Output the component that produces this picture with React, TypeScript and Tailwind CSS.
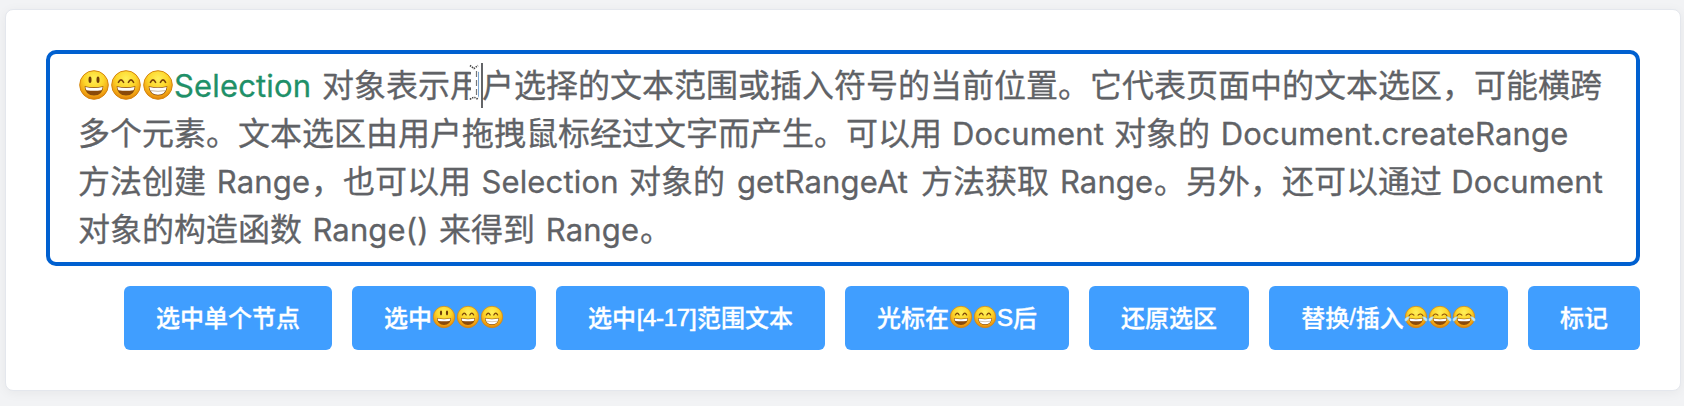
import type { ReactNode } from 'react';

type Mood = 'smile' | 'grin' | 'beam' | 'joy';

function Emoji({ mood, className }: { mood: Mood; className: string }) {
  return (
    <svg viewBox="0 0 32 32" className={className} role="img">
      <defs>
        <radialGradient id={`face-${mood}`} cx="50%" cy="28%" r="75%">
          <stop offset="0" stopColor="#fff05a" />
          <stop offset="0.45" stopColor="#fdd62a" />
          <stop offset="0.8" stopColor="#f0a012" />
          <stop offset="1" stopColor="#d97608" />
        </radialGradient>
      </defs>
      <circle cx="16" cy="16" r="14.3" fill={`url(#face-${mood})`} stroke="#d5870f" strokeWidth="1" />
      {mood === 'smile' && (
        <g fill="#6f3c08">
          <ellipse cx="12" cy="10.7" rx="1.5" ry="3.3" />
          <ellipse cx="20" cy="10.7" rx="1.5" ry="3.3" />
        </g>
      )}
      {(mood === 'grin' || mood === 'beam') && (
        <g fill="none" stroke="#7a4308" strokeWidth="1.6" strokeLinecap="round">
          <path d="M8.4 13.3Q11 8.4 13.6 13.3" />
          <path d="M18.4 13.3Q21 8.4 23.6 13.3" />
        </g>
      )}
      {mood === 'joy' && (
        <g fill="none" stroke="#8a4b08" strokeWidth="1.5" strokeLinecap="round" strokeLinejoin="round">
          <path d="M6.6 14.6Q9.2 10 13.2 13.6" />
          <path d="M25.4 14.6Q22.8 10 18.8 13.6" />
        </g>
      )}
      <path d="M6.6 17.2Q16 19.4 25.4 17.2Q24.6 26.6 16 26.6Q7.4 26.6 6.6 17.2Z" fill="#8a4a0a" />
      {mood === 'beam' ? (
        <g>
          <path d="M7.3 17.9Q16 19.8 24.7 17.9Q23.6 25.7 16 25.7Q8.4 25.7 7.3 17.9Z" fill="#fff" />
          <path d="M8 21.6Q16 23 24 21.6" fill="none" stroke="#b9a58c" strokeWidth="0.8" />
        </g>
      ) : (
        <path d="M7.4 17.9Q16 19.9 24.6 17.9Q24.3 20 23.4 21.2Q16 22.4 8.6 21.2Q7.7 20 7.4 17.9Z" fill="#fff" />
      )}
      {mood === 'joy' && (
        <g fill="#c3e6f5" stroke="#7fc0e0" strokeWidth="0.5">
          <path d="M7.2 15.4C3.4 15.6 0.6 18 1 20.4C1.6 22.8 5.2 22 7.2 15.4Z" />
          <path d="M24.8 15.4C28.6 15.6 31.4 18 31 20.4C30.4 22.8 26.8 22 24.8 15.4Z" />
        </g>
      )}
    </svg>
  );
}

const big = 'h-8 w-8 shrink-0';
const small = 'h-6 w-6 shrink-0';

function Latin({ children, className }: { children: ReactNode; className: string }) {
  return (
    <span className={`shrink-0 text-center font-['Inter','Liberation_Sans',sans-serif] text-[31px] tracking-[0.15px] ${className}`}>
      {children}
    </span>
  );
}

function Line({ children }: { children: ReactNode }) {
  return <div className="flex h-12 items-baseline whitespace-nowrap">{children}</div>;
}

function Button({ children, className }: { children: ReactNode; className: string }) {
  return (
    <button
      type="button"
      className={`flex h-16 shrink-0 items-center justify-center rounded-md bg-[#409eff] pb-0.5 text-2xl font-medium whitespace-nowrap text-white [-webkit-text-stroke:0.3px_#fff] ${className}`}
    >
      {children}
    </button>
  );
}

function Pointer() {
  return (
    <span className="absolute top-1 left-[142px] h-12 w-[24px]">
      <svg viewBox="0 0 24 48" className="h-12 w-6">
        <path d="M4 2h11v5l-1 2v24l1 2v4H4v-4l3-2V9L4 7Z" fill="#fff" />
        <path d="M6 2.5l4 3l4-3M6 36.5q4-4 8 0" fill="none" stroke="#444" strokeWidth="1.6" strokeDasharray="1.4 1" />
        <path d="M12.5 8v24" stroke="#777" strokeWidth="1.2" strokeDasharray="6 3" />
        <path d="M18 0v45" stroke="#3c3e42" strokeWidth="1.6" />
      </svg>
    </span>
  );
}

export default function App() {
  return (
    <div className="h-[406px] w-full overflow-hidden bg-[#f2f3f5] pt-[9px] pr-[3px] pl-[5px] font-['Noto_Sans_CJK_SC',sans-serif]">
      <div className="h-[382px] rounded-lg border border-[#e4e7ed] bg-white px-10 pt-10 shadow-[0_2px_12px_rgba(0,0,0,0.05)]">
        <div className="h-[216px] rounded-[10px] border-4 border-[#0060d0] px-7 pt-[5px] text-[32px] leading-[48px] text-[#606266] [-webkit-text-stroke:0.3px_currentColor]">
          <Line>
            <span className="flex self-center pt-[3px]">
              <Emoji mood="smile" className={big} />
              <Emoji mood="grin" className={big} />
              <Emoji mood="beam" className={big} />
            </span>
            <Latin className="w-[137px] text-[#1f9068]">Selection</Latin>
            <span className="relative ml-[11px]">
              对象表示用户选择的文本范围或插入符号的当前位置。它代表页面中的文本选区，可能横跨
              <Pointer />
            </span>
          </Line>
          <Line>
            <span>多个元素。文本选区由用户拖拽鼠标经过文字而产生。可以用</span>
            <Latin className="w-[172px]">Document</Latin>
            <span>对象的</span>
            <Latin className="ml-[9px] w-[351px]">Document.createRange</Latin>
          </Line>
          <Line>
            <span>方法创建</span>
            <Latin className="ml-[10px] w-[95px]">Range</Latin>
            <span>，也可以用</span>
            <Latin className="w-[158px]">Selection</Latin>
            <span>对象的</span>
            <Latin className="mr-[1px] w-[195px] tracking-[0.3px]">getRangeAt</Latin>
            <span>方法获取</span>
            <Latin className="ml-[10px] w-[95px]">Range</Latin>
            <span>。另外，还可以通过</span>
            <Latin className="ml-[9px] w-[152px]">Document</Latin>
          </Line>
          <Line>
            <span>对象的构造函数</span>
            <Latin className="w-[137px]">Range()</Latin>
            <span>来得到</span>
            <Latin className="ml-[10px] w-[95px]">Range</Latin>
            <span>。</span>
          </Line>
        </div>
        <div className="mt-5 flex justify-end gap-5">
          <Button className="w-[208px]">选中单个节点</Button>
          <Button className="w-[184px]">
            选中
            <Emoji mood="smile" className={small} />
            <Emoji mood="grin" className={small} />
            <Emoji mood="beam" className={small} />
          </Button>
          <Button className="w-[269px]">
            选中<span className="w-[61px] pt-0.5 text-center font-['Liberation_Sans',sans-serif] text-2xl tracking-[-0.3px] [-webkit-text-stroke:0.6px_#fff]">[4-17]</span>范围文本
          </Button>
          <Button className="w-[224px]">
            光标在
            <Emoji mood="grin" className={small} />
            <Emoji mood="beam" className={small} />
            <span className="pt-0.5 font-['Liberation_Sans',sans-serif] [-webkit-text-stroke:0.6px_#fff]">S</span>后
          </Button>
          <Button className="w-[160px]">还原选区</Button>
          <Button className="w-[239px]">
            替换<span className="font-['Liberation_Sans',sans-serif]">/</span>插入
            <Emoji mood="joy" className={small} />
            <Emoji mood="joy" className={small} />
            <Emoji mood="joy" className={small} />
          </Button>
          <Button className="w-[112px]">标记</Button>
        </div>
      </div>
    </div>
  );
}
